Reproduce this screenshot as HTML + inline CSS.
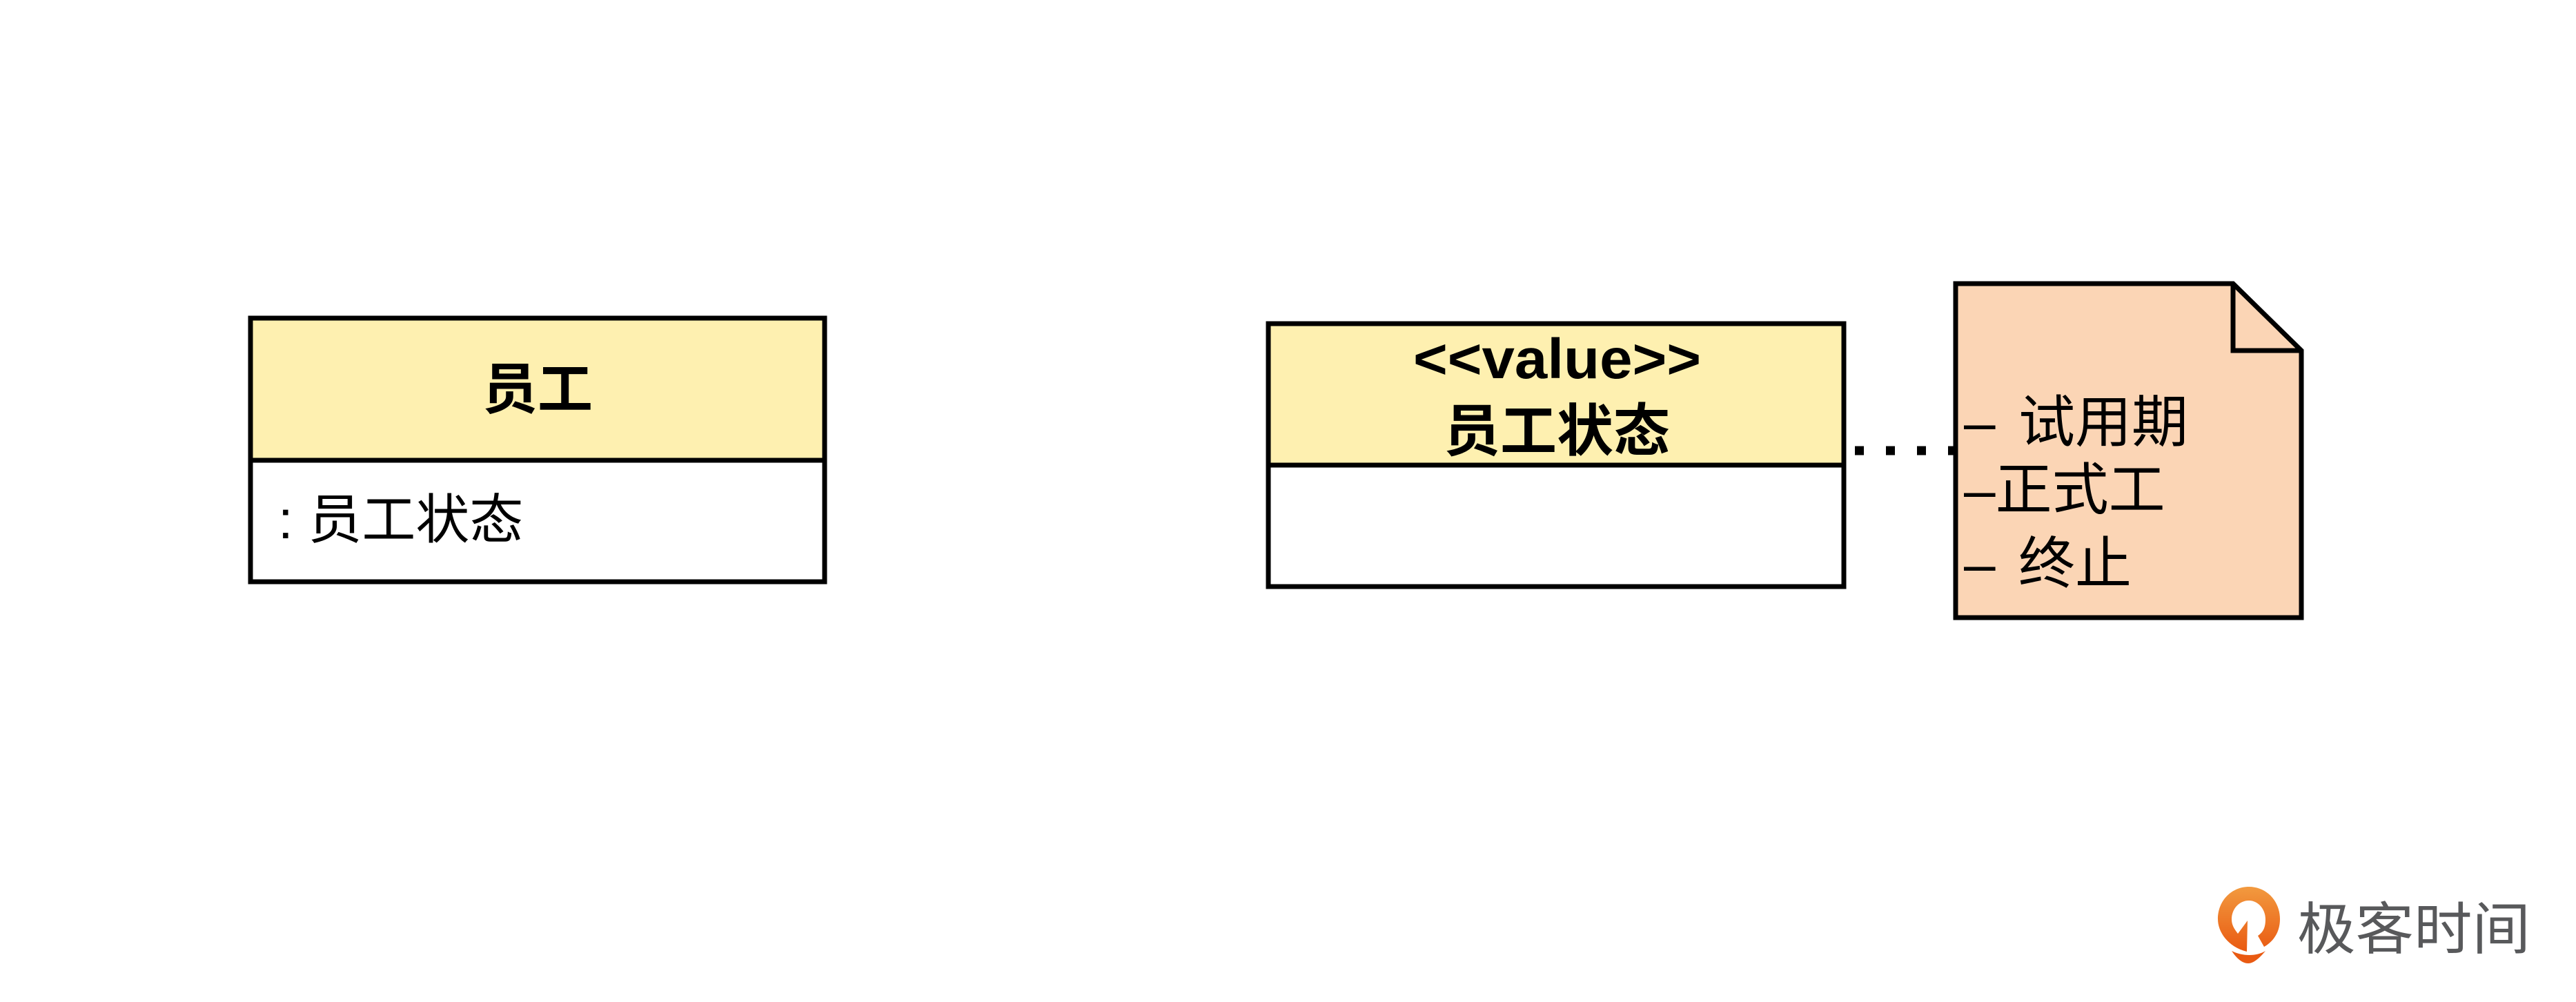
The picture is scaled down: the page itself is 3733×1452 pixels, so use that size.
<!DOCTYPE html>
<html><head><meta charset="utf-8"><style>
html,body{margin:0;padding:0;background:#fff;}
svg{display:block;}
text{font-family:"Liberation Sans","Noto Sans CJK SC",sans-serif;}
</style></head><body>
<svg width="3733" height="1452" viewBox="0 0 3733 1452" xmlns="http://www.w3.org/2000/svg">
<rect width="3733" height="1452" fill="#fff"/>
<rect x="363" y="461" width="832" height="206" fill="#FEF0B0"/>
<rect x="363" y="667" width="832" height="176" fill="#fff"/>
<rect x="363" y="461" width="832" height="382" fill="none" stroke="#000" stroke-width="7"/>
<line x1="363" y1="667" x2="1195" y2="667" stroke="#000" stroke-width="7"/>
<text x="779" y="592" font-size="80" font-weight="bold" text-anchor="middle" fill="#000">员工</text>
<text x="403" y="780" font-size="78" fill="#000">: 员工状态</text>
<rect x="1838" y="469" width="834" height="205" fill="#FEF0B0"/>
<rect x="1838" y="674" width="834" height="176" fill="#fff"/>
<rect x="1838" y="469" width="834" height="381" fill="none" stroke="#000" stroke-width="7"/>
<line x1="1838" y1="674" x2="2672" y2="674" stroke="#000" stroke-width="7"/>
<text x="2048" y="548" font-size="82" font-weight="bold" fill="#000" textLength="417" lengthAdjust="spacingAndGlyphs">&lt;&lt;value&gt;&gt;</text>
<text x="2256" y="653" font-size="82" font-weight="bold" text-anchor="middle" fill="#000">员工状态</text>
<line x1="2688" y1="653" x2="2832" y2="653" stroke="#000" stroke-width="13" stroke-dasharray="13 32"/>
<path d="M2834 411 L3236 411 L3335 508 L3335 895 L2834 895 Z" fill="#FBD5B5" stroke="#000" stroke-width="7"/>
<path d="M3236 411 L3236 508 L3335 508" fill="none" stroke="#000" stroke-width="7"/>
<text x="2846" y="640" font-size="82" fill="#000">–</text>
<text x="2925" y="640" font-size="82" fill="#000">试用期</text>
<text x="2846" y="738" font-size="82" fill="#000">–正式工</text>
<text x="2846" y="845" font-size="82" fill="#000">–</text>
<text x="2925" y="845" font-size="82" fill="#000">终止</text>
<defs><linearGradient id="g" x1="0" y1="0" x2="0" y2="1"><stop offset="0" stop-color="#F29A3F"/><stop offset="1" stop-color="#E95A12"/></linearGradient></defs>
<path d="M3256 1379 C3228 1372 3214 1350 3214 1332 C3214 1305 3234 1285 3259 1285 C3284 1285 3304 1305 3304 1332 C3304 1350 3295 1364 3281 1372 L3272 1356 C3281 1350 3283 1342 3283 1332 C3283 1317 3272 1305 3259 1305 C3245 1305 3234 1317 3234 1332 C3234 1340 3237 1345 3243 1353 L3257 1334 Z" fill="url(#g)"/>
<path d="M3234 1378 C3250 1386 3270 1386 3283 1378 C3273 1390 3265 1396 3258 1396 C3250 1396 3242 1390 3234 1378 Z" fill="#E95A12"/>
<text x="3329" y="1375" font-size="82" fill="#58595B" textLength="338" lengthAdjust="spacingAndGlyphs">极客时间</text>
</svg>
</body></html>
